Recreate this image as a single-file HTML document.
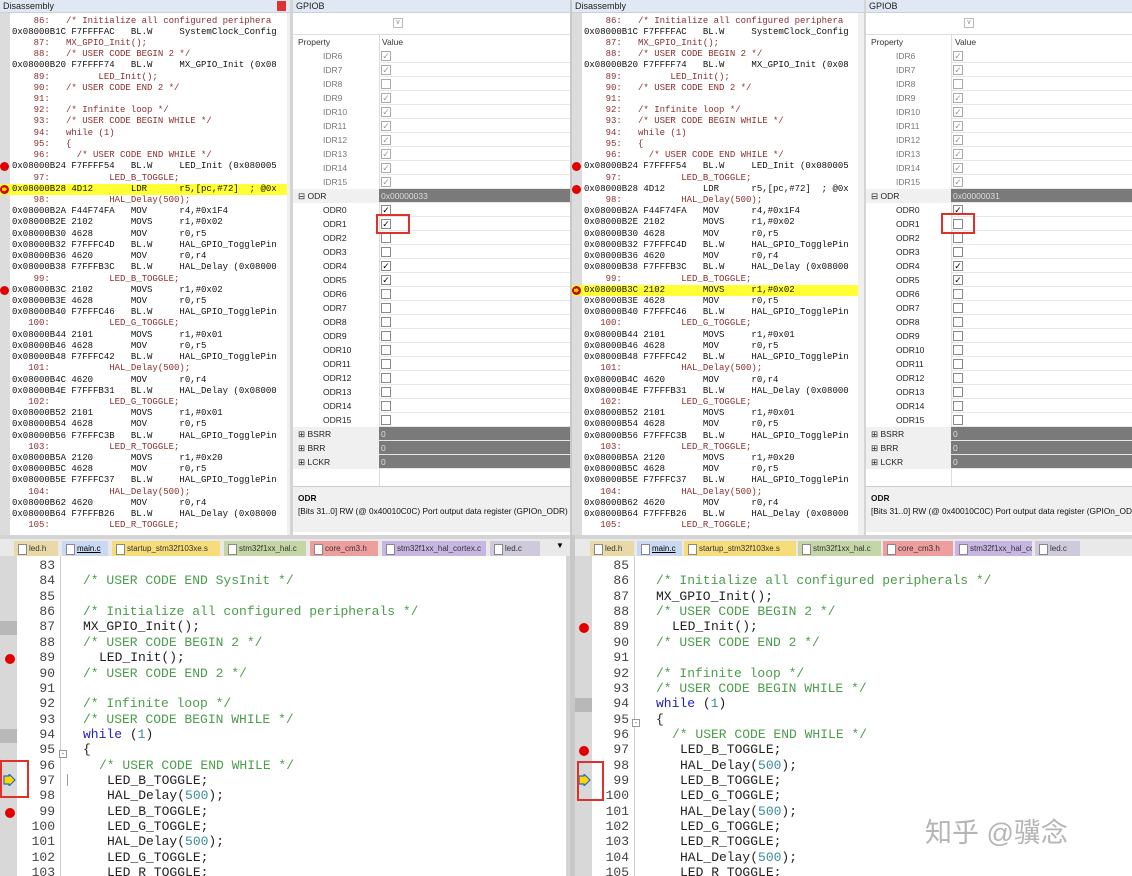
<!DOCTYPE html>
<html><head><meta charset="utf-8"><style>
*{margin:0;padding:0;box-sizing:border-box}
body{width:1132px;height:876px;overflow:hidden;background:#d4d4d4;position:relative;font-family:"Liberation Sans",sans-serif}
.abs{position:absolute}
.title{position:absolute;left:0;right:0;top:0;height:13px;background:#dfe8f3;font-size:9px;line-height:13px;padding-left:3px;color:#222;border-bottom:1px solid #c8d0dc}
.dis{position:absolute;top:13px;bottom:0;left:0;right:0;background:#fff;overflow:hidden}
.dgut{position:absolute;left:0;top:0;bottom:0;width:10px;background:#dcdcdc}
.dl{position:absolute;left:0;top:2.5px;width:100%}
.dl div{height:11.23px;line-height:11.23px;font-family:"Liberation Mono",monospace;font-size:9px;white-space:pre;padding-left:12px;color:#111;position:relative}
.dl div.s{color:#8b2e2e}
.dl div.hl{background:#ffff33}
.bp{position:absolute;left:0;top:1px;width:9px;height:9px;border-radius:50%;background:#e00000}
.ar{position:absolute;left:0;top:1px;width:9px;height:9px;border-radius:50%;background:#d00000}
.ar:after{content:"";position:absolute;left:2px;top:2px;width:5px;height:5px;background:#ffd800;clip-path:polygon(0 20%,50% 20%,50% 0,100% 50%,50% 100%,50% 80%,0 80%)}
.gp{position:absolute;top:13px;left:0;right:0;bottom:0;background:#fff}
.row{position:absolute;left:0;right:0;height:14px;font-size:8.5px;line-height:14px;color:#777}
.row .n{position:absolute}
.row .v{position:absolute;top:0;height:14px;right:0;border-bottom:1px solid #e6e6e6}
.cb{position:absolute;top:2px;width:10px;height:10px;border:1px solid #aaa;background:#fff;font-size:9px;line-height:8px;text-align:center;color:#999}
.cb.k{color:#000;border-color:#888}
.dark{background:#7a7a7a;color:#ddd}
.tabs{position:absolute;height:17px;background:#e9e9e9}
.tab{position:absolute;top:2px;height:15px;font-size:8px;line-height:15px;padding-left:15px;color:#333}
.tab:before{content:"";position:absolute;left:4px;top:3px;width:7px;height:9px;background:#fff;border:1px solid #888}
.ed{position:absolute;background:#fff;overflow:hidden}
.eg{position:absolute;left:0;top:0;bottom:0;width:17px;background:#d8d8d8}
.el{position:absolute;top:0;left:0;width:100%}
.el div{height:15.37px;line-height:15.37px;font-family:"Liberation Mono",monospace;font-size:13px;white-space:pre;position:relative;color:#222}
.el .ln{position:absolute;width:40px;text-align:right;color:#444;font-size:13px}
.el .c{position:absolute}
.cm{color:#4a9e4a}
.kw{color:#2020c0}
.nm{color:#3a8a9a}
.gm{position:absolute;left:0;width:17px;height:14px;background:#b8b8b8}
.rd{position:absolute;width:10px;height:10px;border-radius:50%;background:#e00000}
.rbox{position:absolute;border:2px solid #e0302a}
</style></head><body>

<!-- LEFT HALF -->
<div class="abs" style="left:0;top:0;width:290px;height:535px;background:#f0f0f0">
<div class="title">Disassembly<span style="position:absolute;right:4px;top:1px;width:9px;height:10px;background:#d33;"></span></div>
<div class="dis" style="right:3px">
<div class="dgut"></div>
<div class="dl">
<div class="s">    86:   /* Initialize all configured periphera</div>
<div>0x08000B1C F7FFFFAC   BL.W     SystemClock_Config</div>
<div class="s">    87:   MX_GPIO_Init();</div>
<div class="s">    88:   /* USER CODE BEGIN 2 */</div>
<div>0x08000B20 F7FFFF74   BL.W     MX_GPIO_Init (0x08</div>
<div class="s">    89:         LED_Init();</div>
<div class="s">    90:   /* USER CODE END 2 */</div>
<div class="s">    91: </div>
<div class="s">    92:   /* Infinite loop */</div>
<div class="s">    93:   /* USER CODE BEGIN WHILE */</div>
<div class="s">    94:   while (1)</div>
<div class="s">    95:   {</div>
<div class="s">    96:     /* USER CODE END WHILE */</div>
<div><span class="bp"></span>0x08000B24 F7FFFF54   BL.W     LED_Init (0x080005</div>
<div class="s">    97:           LED_B_TOGGLE;</div>
<div class="hl"><span class="ar"></span>0x08000B28 4D12       LDR      r5,[pc,#72]  ; @0x</div>
<div class="s">    98:           HAL_Delay(500);</div>
<div>0x08000B2A F44F74FA   MOV      r4,#0x1F4</div>
<div>0x08000B2E 2102       MOVS     r1,#0x02</div>
<div>0x08000B30 4628       MOV      r0,r5</div>
<div>0x08000B32 F7FFFC4D   BL.W     HAL_GPIO_TogglePin</div>
<div>0x08000B36 4620       MOV      r0,r4</div>
<div>0x08000B38 F7FFFB3C   BL.W     HAL_Delay (0x08000</div>
<div class="s">    99:           LED_B_TOGGLE;</div>
<div><span class="bp"></span>0x08000B3C 2102       MOVS     r1,#0x02</div>
<div>0x08000B3E 4628       MOV      r0,r5</div>
<div>0x08000B40 F7FFFC46   BL.W     HAL_GPIO_TogglePin</div>
<div class="s">   100:           LED_G_TOGGLE;</div>
<div>0x08000B44 2101       MOVS     r1,#0x01</div>
<div>0x08000B46 4628       MOV      r0,r5</div>
<div>0x08000B48 F7FFFC42   BL.W     HAL_GPIO_TogglePin</div>
<div class="s">   101:           HAL_Delay(500);</div>
<div>0x08000B4C 4620       MOV      r0,r4</div>
<div>0x08000B4E F7FFFB31   BL.W     HAL_Delay (0x08000</div>
<div class="s">   102:           LED_G_TOGGLE;</div>
<div>0x08000B52 2101       MOVS     r1,#0x01</div>
<div>0x08000B54 4628       MOV      r0,r5</div>
<div>0x08000B56 F7FFFC3B   BL.W     HAL_GPIO_TogglePin</div>
<div class="s">   103:           LED_R_TOGGLE;</div>
<div>0x08000B5A 2120       MOVS     r1,#0x20</div>
<div>0x08000B5C 4628       MOV      r0,r5</div>
<div>0x08000B5E F7FFFC37   BL.W     HAL_GPIO_TogglePin</div>
<div class="s">   104:           HAL_Delay(500);</div>
<div>0x08000B62 4620       MOV      r0,r4</div>
<div>0x08000B64 F7FFFB26   BL.W     HAL_Delay (0x08000</div>
<div class="s">   105:           LED_R_TOGGLE;</div>
</div>
</div>
</div>

<div class="abs" style="left:293px;top:0;width:277px;height:535px;background:#f0f0f0">
<div class="title">GPIOB</div>
<div class="gp">
<div class="abs" style="left:100px;top:5px;width:10px;height:10px;border:1px solid #bbb;font-size:7px;line-height:8px;text-align:center;color:#888">v</div>
<div class="abs" style="left:0;right:0;top:21px;height:1px;background:#ddd"></div>
<div class="abs" style="left:5px;top:24px;font-size:8.5px;color:#333">Property</div>
<div class="abs" style="left:89px;top:24px;font-size:8.5px;color:#333">Value</div>
<div class="abs" style="left:86px;top:22px;width:1px;height:451px;background:#ddd"></div>
</div>
</div>

<!-- RIGHT HALF -->
<div class="abs" style="left:570px;top:0;width:5px;height:876px;background:#c8c8c8"></div>
<div class="abs" style="left:572px;top:0;width:292px;height:535px;background:#f0f0f0">
<div class="title">Disassembly</div>
<div class="dis" style="right:6px">
<div class="dgut"></div>
<div class="dl">
<div class="s">    86:   /* Initialize all configured periphera</div>
<div>0x08000B1C F7FFFFAC   BL.W     SystemClock_Config</div>
<div class="s">    87:   MX_GPIO_Init();</div>
<div class="s">    88:   /* USER CODE BEGIN 2 */</div>
<div>0x08000B20 F7FFFF74   BL.W     MX_GPIO_Init (0x08</div>
<div class="s">    89:         LED_Init();</div>
<div class="s">    90:   /* USER CODE END 2 */</div>
<div class="s">    91: </div>
<div class="s">    92:   /* Infinite loop */</div>
<div class="s">    93:   /* USER CODE BEGIN WHILE */</div>
<div class="s">    94:   while (1)</div>
<div class="s">    95:   {</div>
<div class="s">    96:     /* USER CODE END WHILE */</div>
<div><span class="bp"></span>0x08000B24 F7FFFF54   BL.W     LED_Init (0x080005</div>
<div class="s">    97:           LED_B_TOGGLE;</div>
<div><span class="bp"></span>0x08000B28 4D12       LDR      r5,[pc,#72]  ; @0x</div>
<div class="s">    98:           HAL_Delay(500);</div>
<div>0x08000B2A F44F74FA   MOV      r4,#0x1F4</div>
<div>0x08000B2E 2102       MOVS     r1,#0x02</div>
<div>0x08000B30 4628       MOV      r0,r5</div>
<div>0x08000B32 F7FFFC4D   BL.W     HAL_GPIO_TogglePin</div>
<div>0x08000B36 4620       MOV      r0,r4</div>
<div>0x08000B38 F7FFFB3C   BL.W     HAL_Delay (0x08000</div>
<div class="s">    99:           LED_B_TOGGLE;</div>
<div class="hl"><span class="ar"></span>0x08000B3C 2102       MOVS     r1,#0x02</div>
<div>0x08000B3E 4628       MOV      r0,r5</div>
<div>0x08000B40 F7FFFC46   BL.W     HAL_GPIO_TogglePin</div>
<div class="s">   100:           LED_G_TOGGLE;</div>
<div>0x08000B44 2101       MOVS     r1,#0x01</div>
<div>0x08000B46 4628       MOV      r0,r5</div>
<div>0x08000B48 F7FFFC42   BL.W     HAL_GPIO_TogglePin</div>
<div class="s">   101:           HAL_Delay(500);</div>
<div>0x08000B4C 4620       MOV      r0,r4</div>
<div>0x08000B4E F7FFFB31   BL.W     HAL_Delay (0x08000</div>
<div class="s">   102:           LED_G_TOGGLE;</div>
<div>0x08000B52 2101       MOVS     r1,#0x01</div>
<div>0x08000B54 4628       MOV      r0,r5</div>
<div>0x08000B56 F7FFFC3B   BL.W     HAL_GPIO_TogglePin</div>
<div class="s">   103:           LED_R_TOGGLE;</div>
<div>0x08000B5A 2120       MOVS     r1,#0x20</div>
<div>0x08000B5C 4628       MOV      r0,r5</div>
<div>0x08000B5E F7FFFC37   BL.W     HAL_GPIO_TogglePin</div>
<div class="s">   104:           HAL_Delay(500);</div>
<div>0x08000B62 4620       MOV      r0,r4</div>
<div>0x08000B64 F7FFFB26   BL.W     HAL_Delay (0x08000</div>
<div class="s">   105:           LED_R_TOGGLE;</div>
</div>
</div>
</div>

<div class="abs" style="left:866px;top:0;width:266px;height:535px;background:#f0f0f0">
<div class="title">GPIOB</div>
<div class="gp">
<div class="abs" style="left:98px;top:5px;width:10px;height:10px;border:1px solid #bbb;font-size:7px;line-height:8px;text-align:center;color:#888">v</div>
<div class="abs" style="left:0;right:0;top:21px;height:1px;background:#ddd"></div>
<div class="abs" style="left:5px;top:24px;font-size:8.5px;color:#333">Property</div>
<div class="abs" style="left:89px;top:24px;font-size:8.5px;color:#333">Value</div>
<div class="abs" style="left:85px;top:22px;width:1px;height:451px;background:#ddd"></div>
</div>
</div>

<!-- GPIOB rows left -->
<div class="abs" style="left:293px;top:0;width:277px;height:480px">
<div class="row" style="top:49px"><span class="n" style="left:30px">IDR6</span><div class="v" style="left:86px"><span class="cb" style="left:2px">✓</span></div></div>
<div class="row" style="top:63px"><span class="n" style="left:30px">IDR7</span><div class="v" style="left:86px"><span class="cb" style="left:2px">✓</span></div></div>
<div class="row" style="top:77px"><span class="n" style="left:30px">IDR8</span><div class="v" style="left:86px"><span class="cb" style="left:2px"></span></div></div>
<div class="row" style="top:91px"><span class="n" style="left:30px">IDR9</span><div class="v" style="left:86px"><span class="cb" style="left:2px">✓</span></div></div>
<div class="row" style="top:105px"><span class="n" style="left:30px">IDR10</span><div class="v" style="left:86px"><span class="cb" style="left:2px">✓</span></div></div>
<div class="row" style="top:119px"><span class="n" style="left:30px">IDR11</span><div class="v" style="left:86px"><span class="cb" style="left:2px">✓</span></div></div>
<div class="row" style="top:133px"><span class="n" style="left:30px">IDR12</span><div class="v" style="left:86px"><span class="cb" style="left:2px">✓</span></div></div>
<div class="row" style="top:147px"><span class="n" style="left:30px">IDR13</span><div class="v" style="left:86px"><span class="cb" style="left:2px">✓</span></div></div>
<div class="row" style="top:161px"><span class="n" style="left:30px">IDR14</span><div class="v" style="left:86px"><span class="cb" style="left:2px">✓</span></div></div>
<div class="row" style="top:175px"><span class="n" style="left:30px">IDR15</span><div class="v" style="left:86px"><span class="cb" style="left:2px">✓</span></div></div>
<div class="row" style="top:189px;color:#222;background:#f0f0f0"><span class="n" style="left:5px">⊟ ODR</span><div class="v dark" style="left:86px;padding-left:2px">0x00000033</div></div>
<div class="row" style="top:203px;color:#222"><span class="n" style="left:30px">ODR0</span><div class="v" style="left:86px"><span class="cb k" style="left:2px">✓</span></div></div>
<div class="row" style="top:217px;color:#222"><span class="n" style="left:30px">ODR1</span><div class="v" style="left:86px"><span class="cb k" style="left:2px">✓</span></div></div>
<div class="row" style="top:231px;color:#222"><span class="n" style="left:30px">ODR2</span><div class="v" style="left:86px"><span class="cb k" style="left:2px"></span></div></div>
<div class="row" style="top:245px;color:#222"><span class="n" style="left:30px">ODR3</span><div class="v" style="left:86px"><span class="cb k" style="left:2px"></span></div></div>
<div class="row" style="top:259px;color:#222"><span class="n" style="left:30px">ODR4</span><div class="v" style="left:86px"><span class="cb k" style="left:2px">✓</span></div></div>
<div class="row" style="top:273px;color:#222"><span class="n" style="left:30px">ODR5</span><div class="v" style="left:86px"><span class="cb k" style="left:2px">✓</span></div></div>
<div class="row" style="top:287px;color:#222"><span class="n" style="left:30px">ODR6</span><div class="v" style="left:86px"><span class="cb k" style="left:2px"></span></div></div>
<div class="row" style="top:301px;color:#222"><span class="n" style="left:30px">ODR7</span><div class="v" style="left:86px"><span class="cb k" style="left:2px"></span></div></div>
<div class="row" style="top:315px;color:#222"><span class="n" style="left:30px">ODR8</span><div class="v" style="left:86px"><span class="cb k" style="left:2px"></span></div></div>
<div class="row" style="top:329px;color:#222"><span class="n" style="left:30px">ODR9</span><div class="v" style="left:86px"><span class="cb k" style="left:2px"></span></div></div>
<div class="row" style="top:343px;color:#222"><span class="n" style="left:30px">ODR10</span><div class="v" style="left:86px"><span class="cb k" style="left:2px"></span></div></div>
<div class="row" style="top:357px;color:#222"><span class="n" style="left:30px">ODR11</span><div class="v" style="left:86px"><span class="cb k" style="left:2px"></span></div></div>
<div class="row" style="top:371px;color:#222"><span class="n" style="left:30px">ODR12</span><div class="v" style="left:86px"><span class="cb k" style="left:2px"></span></div></div>
<div class="row" style="top:385px;color:#222"><span class="n" style="left:30px">ODR13</span><div class="v" style="left:86px"><span class="cb k" style="left:2px"></span></div></div>
<div class="row" style="top:399px;color:#222"><span class="n" style="left:30px">ODR14</span><div class="v" style="left:86px"><span class="cb k" style="left:2px"></span></div></div>
<div class="row" style="top:413px;color:#222"><span class="n" style="left:30px">ODR15</span><div class="v" style="left:86px"><span class="cb k" style="left:2px"></span></div></div>
<div class="row" style="top:427px;color:#222;background:#f0f0f0"><span class="n" style="left:5px">⊞ BSRR</span><div class="v dark" style="left:86px;padding-left:2px">0</div></div>
<div class="row" style="top:441px;color:#222;background:#f0f0f0"><span class="n" style="left:5px">⊞ BRR</span><div class="v dark" style="left:86px;padding-left:2px">0</div></div>
<div class="row" style="top:455px;color:#222;background:#f0f0f0"><span class="n" style="left:5px">⊞ LCKR</span><div class="v dark" style="left:86px;padding-left:2px">0</div></div>
</div>
<div class="abs" style="left:293px;top:486px;width:277px;height:46px;background:#f0f0f0;border-top:1px solid #ccc;padding:6px 5px;font-size:8.3px;color:#111;white-space:nowrap;overflow:hidden"><b>ODR</b><br><span style="line-height:16px">[Bits 31..0] RW (@ 0x40010C0C) Port output data register  (GPIOn_ODR)</span></div>
<div class="rbox" style="left:376px;top:214px;width:34px;height:20px"></div>

<!-- GPIOB rows right -->
<div class="abs" style="left:866px;top:0;width:266px;height:480px">
<div class="row" style="top:49px"><span class="n" style="left:30px">IDR6</span><div class="v" style="left:85px"><span class="cb" style="left:2px">✓</span></div></div>
<div class="row" style="top:63px"><span class="n" style="left:30px">IDR7</span><div class="v" style="left:85px"><span class="cb" style="left:2px">✓</span></div></div>
<div class="row" style="top:77px"><span class="n" style="left:30px">IDR8</span><div class="v" style="left:85px"><span class="cb" style="left:2px"></span></div></div>
<div class="row" style="top:91px"><span class="n" style="left:30px">IDR9</span><div class="v" style="left:85px"><span class="cb" style="left:2px">✓</span></div></div>
<div class="row" style="top:105px"><span class="n" style="left:30px">IDR10</span><div class="v" style="left:85px"><span class="cb" style="left:2px">✓</span></div></div>
<div class="row" style="top:119px"><span class="n" style="left:30px">IDR11</span><div class="v" style="left:85px"><span class="cb" style="left:2px">✓</span></div></div>
<div class="row" style="top:133px"><span class="n" style="left:30px">IDR12</span><div class="v" style="left:85px"><span class="cb" style="left:2px">✓</span></div></div>
<div class="row" style="top:147px"><span class="n" style="left:30px">IDR13</span><div class="v" style="left:85px"><span class="cb" style="left:2px">✓</span></div></div>
<div class="row" style="top:161px"><span class="n" style="left:30px">IDR14</span><div class="v" style="left:85px"><span class="cb" style="left:2px">✓</span></div></div>
<div class="row" style="top:175px"><span class="n" style="left:30px">IDR15</span><div class="v" style="left:85px"><span class="cb" style="left:2px">✓</span></div></div>
<div class="row" style="top:189px;color:#222;background:#f0f0f0"><span class="n" style="left:5px">⊟ ODR</span><div class="v dark" style="left:85px;padding-left:2px">0x00000031</div></div>
<div class="row" style="top:203px;color:#222"><span class="n" style="left:30px">ODR0</span><div class="v" style="left:85px"><span class="cb k" style="left:2px">✓</span></div></div>
<div class="row" style="top:217px;color:#222"><span class="n" style="left:30px">ODR1</span><div class="v" style="left:85px"><span class="cb k" style="left:2px"></span></div></div>
<div class="row" style="top:231px;color:#222"><span class="n" style="left:30px">ODR2</span><div class="v" style="left:85px"><span class="cb k" style="left:2px"></span></div></div>
<div class="row" style="top:245px;color:#222"><span class="n" style="left:30px">ODR3</span><div class="v" style="left:85px"><span class="cb k" style="left:2px"></span></div></div>
<div class="row" style="top:259px;color:#222"><span class="n" style="left:30px">ODR4</span><div class="v" style="left:85px"><span class="cb k" style="left:2px">✓</span></div></div>
<div class="row" style="top:273px;color:#222"><span class="n" style="left:30px">ODR5</span><div class="v" style="left:85px"><span class="cb k" style="left:2px">✓</span></div></div>
<div class="row" style="top:287px;color:#222"><span class="n" style="left:30px">ODR6</span><div class="v" style="left:85px"><span class="cb k" style="left:2px"></span></div></div>
<div class="row" style="top:301px;color:#222"><span class="n" style="left:30px">ODR7</span><div class="v" style="left:85px"><span class="cb k" style="left:2px"></span></div></div>
<div class="row" style="top:315px;color:#222"><span class="n" style="left:30px">ODR8</span><div class="v" style="left:85px"><span class="cb k" style="left:2px"></span></div></div>
<div class="row" style="top:329px;color:#222"><span class="n" style="left:30px">ODR9</span><div class="v" style="left:85px"><span class="cb k" style="left:2px"></span></div></div>
<div class="row" style="top:343px;color:#222"><span class="n" style="left:30px">ODR10</span><div class="v" style="left:85px"><span class="cb k" style="left:2px"></span></div></div>
<div class="row" style="top:357px;color:#222"><span class="n" style="left:30px">ODR11</span><div class="v" style="left:85px"><span class="cb k" style="left:2px"></span></div></div>
<div class="row" style="top:371px;color:#222"><span class="n" style="left:30px">ODR12</span><div class="v" style="left:85px"><span class="cb k" style="left:2px"></span></div></div>
<div class="row" style="top:385px;color:#222"><span class="n" style="left:30px">ODR13</span><div class="v" style="left:85px"><span class="cb k" style="left:2px"></span></div></div>
<div class="row" style="top:399px;color:#222"><span class="n" style="left:30px">ODR14</span><div class="v" style="left:85px"><span class="cb k" style="left:2px"></span></div></div>
<div class="row" style="top:413px;color:#222"><span class="n" style="left:30px">ODR15</span><div class="v" style="left:85px"><span class="cb k" style="left:2px"></span></div></div>
<div class="row" style="top:427px;color:#222;background:#f0f0f0"><span class="n" style="left:5px">⊞ BSRR</span><div class="v dark" style="left:85px;padding-left:2px">0</div></div>
<div class="row" style="top:441px;color:#222;background:#f0f0f0"><span class="n" style="left:5px">⊞ BRR</span><div class="v dark" style="left:85px;padding-left:2px">0</div></div>
<div class="row" style="top:455px;color:#222;background:#f0f0f0"><span class="n" style="left:5px">⊞ LCKR</span><div class="v dark" style="left:85px;padding-left:2px">0</div></div>
</div>
<div class="abs" style="left:866px;top:486px;width:266px;height:46px;background:#f0f0f0;border-top:1px solid #ccc;padding:6px 5px;font-size:8.3px;color:#111;white-space:nowrap;overflow:hidden"><b>ODR</b><br><span style="line-height:16px">[Bits 31..0] RW (@ 0x40010C0C) Port output data register  (GPIOn_ODR)</span></div>
<div class="rbox" style="left:941px;top:213px;width:34px;height:21px"></div>

<!-- TAB BARS -->
<div class="tabs" style="left:0;top:539px;width:570px">
<div class="tab" style="left:14px;width:44px;background:#e9d9a8">led.h</div>
<div class="tab" style="left:62px;width:46px;background:#c9d9f1;text-decoration:underline;color:#000">main.c</div>
<div class="tab" style="left:112px;width:108px;background:#f7dc7a">startup_stm32f103xe.s</div>
<div class="tab" style="left:224px;width:82px;background:#c4d6a6">stm32f1xx_hal.c</div>
<div class="tab" style="left:310px;width:68px;background:#ef9e9e">core_cm3.h</div>
<div class="tab" style="left:382px;width:104px;background:#c8b6e2">stm32f1xx_hal_cortex.c</div>
<div class="tab" style="left:490px;width:50px;background:#cfcadb">led.c</div>
<div class="abs" style="left:556px;top:2px;font-size:8px">▼</div>
</div>
<div class="tabs" style="left:575px;top:539px;width:557px">
<div class="tab" style="left:15px;width:44px;background:#e9d9a8">led.h</div>
<div class="tab" style="left:62px;width:45px;background:#c9d9f1;text-decoration:underline;color:#000">main.c</div>
<div class="tab" style="left:109px;width:112px;background:#f7dc7a">startup_stm32f103xe.s</div>
<div class="tab" style="left:223px;width:83px;background:#c4d6a6">stm32f1xx_hal.c</div>
<div class="tab" style="left:308px;width:70px;background:#ef9e9e">core_cm3.h</div>
<div class="tab" style="left:380px;width:77px;background:#c8b6e2;overflow:hidden;white-space:nowrap">stm32f1xx_hal_cortex.c</div>
<div class="tab" style="left:460px;width:45px;background:#cfcadb">led.c</div>
</div>

<!-- LEFT EDITOR -->
<div class="ed" style="left:0;top:556px;width:566px;height:320px">
<div class="eg"></div>
<div class="abs" style="left:60px;top:0;bottom:0;width:1px;background:#ccc"></div>
<div class="gm" style="top:65px"></div>
<div class="gm" style="top:173px"></div>
<div class="rd" style="left:5px;top:98px"></div>
<div class="rd" style="left:5px;top:252px"></div>
<svg class="abs" style="left:3px;top:218px" width="14" height="12"><polygon points="1,2 6,2 6,0 12,6 6,12 6,10 1,10" fill="#ffd700" stroke="#2a6ac0" stroke-width="1.2"/></svg>
<div class="abs" style="left:59px;top:194px;width:8px;height:8px;border:1px solid #999;background:#fff;font-size:8px;line-height:6px;text-align:center;color:#666">-</div>
<div class="abs" style="left:67px;top:218px;width:1px;height:12px;background:#999"></div>
<div class="el" style="top:2px">
<div><span class="ln" style="left:15px">83</span></div>
<div><span class="ln" style="left:15px">84</span><span class="c cm" style="left:83px">/* USER CODE END SysInit */</span></div>
<div><span class="ln" style="left:15px">85</span></div>
<div><span class="ln" style="left:15px">86</span><span class="c cm" style="left:83px">/* Initialize all configured peripherals */</span></div>
<div><span class="ln" style="left:15px">87</span><span class="c" style="left:83px">MX_GPIO_Init();</span></div>
<div><span class="ln" style="left:15px">88</span><span class="c cm" style="left:83px">/* USER CODE BEGIN 2 */</span></div>
<div><span class="ln" style="left:15px">89</span><span class="c" style="left:99px">LED_Init();</span></div>
<div><span class="ln" style="left:15px">90</span><span class="c cm" style="left:83px">/* USER CODE END 2 */</span></div>
<div><span class="ln" style="left:15px">91</span></div>
<div><span class="ln" style="left:15px">92</span><span class="c cm" style="left:83px">/* Infinite loop */</span></div>
<div><span class="ln" style="left:15px">93</span><span class="c cm" style="left:83px">/* USER CODE BEGIN WHILE */</span></div>
<div><span class="ln" style="left:15px">94</span><span class="c" style="left:83px"><span class="kw">while</span> (<span class="nm">1</span>)</span></div>
<div><span class="ln" style="left:15px">95</span><span class="c" style="left:83px">{</span></div>
<div><span class="ln" style="left:15px">96</span><span class="c cm" style="left:99px">/* USER CODE END WHILE */</span></div>
<div><span class="ln" style="left:15px">97</span><span class="c" style="left:107px">LED_B_TOGGLE;</span></div>
<div><span class="ln" style="left:15px">98</span><span class="c" style="left:107px">HAL_Delay(<span class="nm">500</span>);</span></div>
<div><span class="ln" style="left:15px">99</span><span class="c" style="left:107px">LED_B_TOGGLE;</span></div>
<div><span class="ln" style="left:15px">100</span><span class="c" style="left:107px">LED_G_TOGGLE;</span></div>
<div><span class="ln" style="left:15px">101</span><span class="c" style="left:107px">HAL_Delay(<span class="nm">500</span>);</span></div>
<div><span class="ln" style="left:15px">102</span><span class="c" style="left:107px">LED_G_TOGGLE;</span></div>
<div><span class="ln" style="left:15px">103</span><span class="c" style="left:107px">LED_R_TOGGLE;</span></div>
</div>
<div class="rbox" style="left:0;top:204px;width:29px;height:38px"></div>
</div>

<!-- RIGHT EDITOR -->
<div class="ed" style="left:575px;top:556px;width:557px;height:320px">
<div class="eg"></div>
<div class="abs" style="left:59px;top:0;bottom:0;width:1px;background:#ccc"></div>
<div class="gm" style="top:142px;left:0"></div>
<div class="rd" style="left:4px;top:67px"></div>
<div class="rd" style="left:4px;top:190px"></div>
<svg class="abs" style="left:3px;top:218px" width="14" height="12"><polygon points="1,2 6,2 6,0 12,6 6,12 6,10 1,10" fill="#ffd700" stroke="#2a6ac0" stroke-width="1.2"/></svg>
<div class="abs" style="left:57px;top:163px;width:8px;height:8px;border:1px solid #999;background:#fff;font-size:8px;line-height:6px;text-align:center;color:#666">-</div>
<div class="el" style="top:2px">
<div><span class="ln" style="left:14px">85</span></div>
<div><span class="ln" style="left:14px">86</span><span class="c cm" style="left:81px">/* Initialize all configured peripherals */</span></div>
<div><span class="ln" style="left:14px">87</span><span class="c" style="left:81px">MX_GPIO_Init();</span></div>
<div><span class="ln" style="left:14px">88</span><span class="c cm" style="left:81px">/* USER CODE BEGIN 2 */</span></div>
<div><span class="ln" style="left:14px">89</span><span class="c" style="left:97px">LED_Init();</span></div>
<div><span class="ln" style="left:14px">90</span><span class="c cm" style="left:81px">/* USER CODE END 2 */</span></div>
<div><span class="ln" style="left:14px">91</span></div>
<div><span class="ln" style="left:14px">92</span><span class="c cm" style="left:81px">/* Infinite loop */</span></div>
<div><span class="ln" style="left:14px">93</span><span class="c cm" style="left:81px">/* USER CODE BEGIN WHILE */</span></div>
<div><span class="ln" style="left:14px">94</span><span class="c" style="left:81px"><span class="kw">while</span> (<span class="nm">1</span>)</span></div>
<div><span class="ln" style="left:14px">95</span><span class="c" style="left:81px">{</span></div>
<div><span class="ln" style="left:14px">96</span><span class="c cm" style="left:97px">/* USER CODE END WHILE */</span></div>
<div><span class="ln" style="left:14px">97</span><span class="c" style="left:105px">LED_B_TOGGLE;</span></div>
<div><span class="ln" style="left:14px">98</span><span class="c" style="left:105px">HAL_Delay(<span class="nm">500</span>);</span></div>
<div><span class="ln" style="left:14px">99</span><span class="c" style="left:105px">LED_B_TOGGLE;</span></div>
<div><span class="ln" style="left:14px">100</span><span class="c" style="left:105px">LED_G_TOGGLE;</span></div>
<div><span class="ln" style="left:14px">101</span><span class="c" style="left:105px">HAL_Delay(<span class="nm">500</span>);</span></div>
<div><span class="ln" style="left:14px">102</span><span class="c" style="left:105px">LED_G_TOGGLE;</span></div>
<div><span class="ln" style="left:14px">103</span><span class="c" style="left:105px">LED_R_TOGGLE;</span></div>
<div><span class="ln" style="left:14px">104</span><span class="c" style="left:105px">HAL_Delay(<span class="nm">500</span>);</span></div>
<div><span class="ln" style="left:14px">105</span><span class="c" style="left:105px">LED_R_TOGGLE;</span></div>
</div>
<div class="rbox" style="left:2px;top:205px;width:27px;height:40px"></div>
<div class="abs" style="left:350px;top:255px;font-family:'Liberation Sans','Noto Sans CJK SC',sans-serif;font-size:27px;color:rgba(120,120,120,0.55)">知乎 @骥念</div>
</div>
</body></html>
